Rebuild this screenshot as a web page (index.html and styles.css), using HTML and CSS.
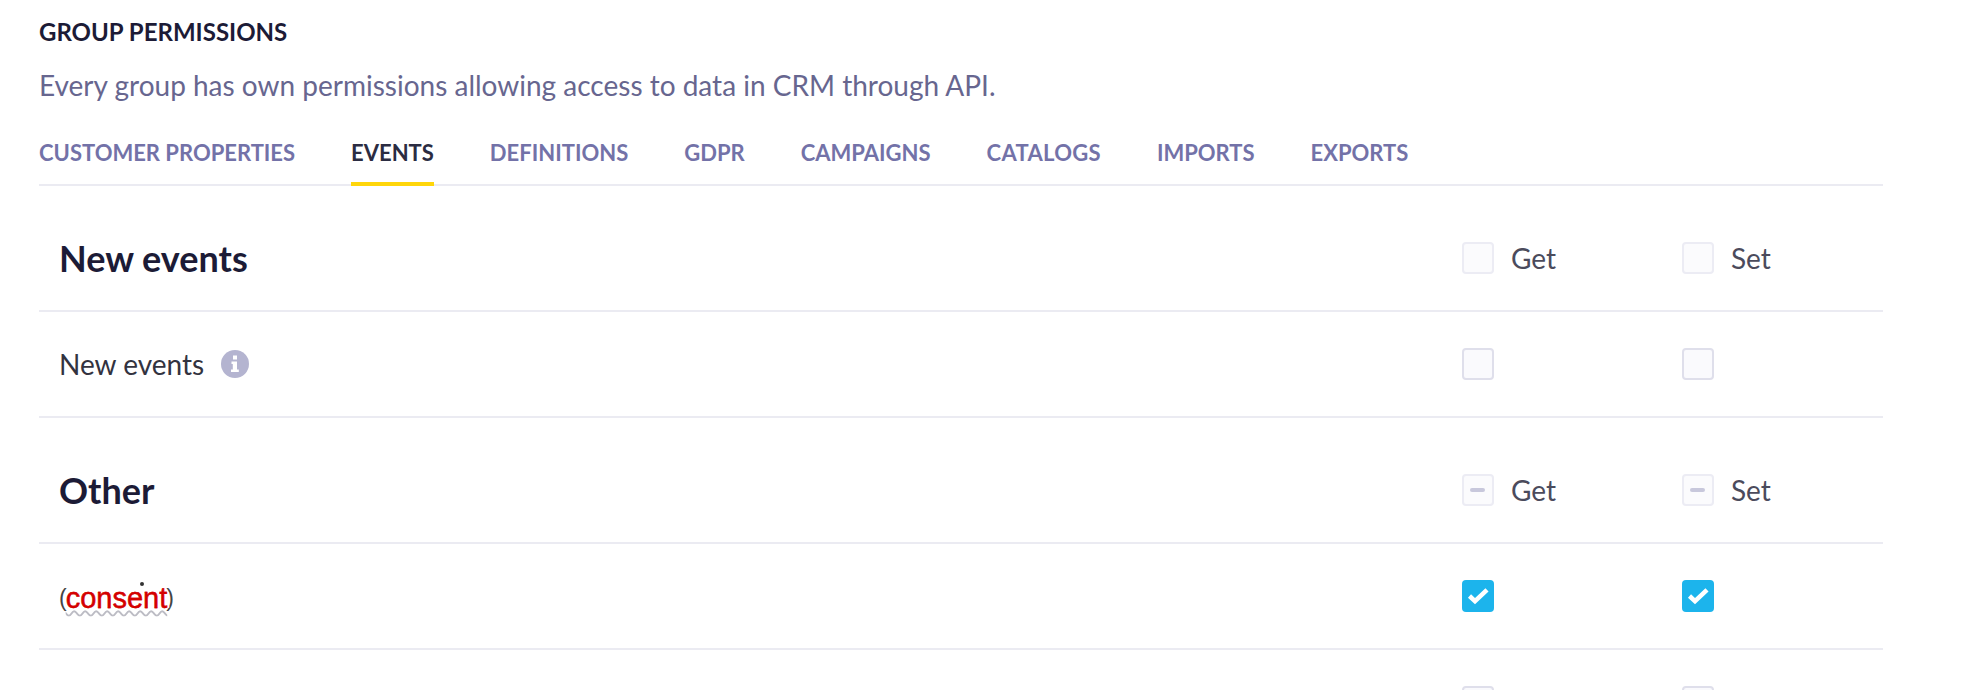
FILE: index.html
```html
<!DOCTYPE html>
<html lang="en">
<head>
<meta charset="utf-8">
<title>Group permissions</title>
<link rel="stylesheet" href="styles.css">
</head>
<body>
<main class="page">
  <h2 class="title">GROUP PERMISSIONS</h2>
  <p class="desc">Every group has own permissions allowing access to data in CRM through API.</p>
  <nav class="tabs">
    <a class="tab">CUSTOMER PROPERTIES</a>
    <a class="tab active">EVENTS</a>
    <a class="tab">DEFINITIONS</a>
    <a class="tab">GDPR</a>
    <a class="tab">CAMPAIGNS</a>
    <a class="tab tab-loose">CATALOGS</a>
    <a class="tab">IMPORTS</a>
    <a class="tab">EXPORTS</a>
  </nav>

  <section class="row head">
    <h3 class="section-name">New events</h3>
    <div class="cell"><span class="box faint"></span><span class="lbl">Get</span></div>
    <div class="cell"><span class="box faint"></span><span class="lbl">Set</span></div>
  </section>
  <section class="row item">
    <div class="name">New events
      <svg class="info" viewBox="0 0 28 28" width="28" height="28"><circle cx="14" cy="14" r="14" fill="#b4b4d0"/><path d="M12 5.500h4v4h-4zM10.500 11.500h5.500v8h1.800v2.500h-7.800v-2.500h1.800v-5.500h-1.300z" fill="#fff"/></svg>
    </div>
    <div class="cell"><span class="box"></span></div>
    <div class="cell"><span class="box"></span></div>
  </section>

  <section class="row head">
    <h3 class="section-name">Other</h3>
    <div class="cell"><span class="box faint mixed"></span><span class="lbl">Get</span></div>
    <div class="cell"><span class="box faint mixed"></span><span class="lbl">Set</span></div>
  </section>
  <section class="row item">
    <div class="name consent"><span class="paren">(</span><span class="word">consent</span><span class="paren">)</span></div>
    <div class="cell"><span class="box on"><svg viewBox="0 0 32 32" width="32" height="32"><path d="M7.500 16l5.500 5.200L25 9.800" fill="none" stroke="#fff" stroke-width="4.500"/></svg></span></div>
    <div class="cell"><span class="box on"><svg viewBox="0 0 32 32" width="32" height="32"><path d="M7.500 16l5.500 5.200L25 9.800" fill="none" stroke="#fff" stroke-width="4.500"/></svg></span></div>
  </section>
  <section class="row item">
    <div class="name"></div>
    <div class="cell"><span class="box"></span></div>
    <div class="cell"><span class="box"></span></div>
  </section>
</main>
</body>
</html>
```
FILE: styles.css
```css
html, body { margin: 0; padding: 0; background: #fff; height: 690px; overflow: hidden; }
body { font-family: Lato, "Open Sans", sans-serif; color: #1c1b36; }
.page { width: 1844px; margin-left: 39px; }
.title { margin: 0; padding-top: 19px; font-size: 24px; line-height: 26px; font-weight: 700; color: #1c1b36; }
.desc { margin: 0; padding-top: 20px; font-size: 28px; line-height: 40px; color: #67668f; }
.tabs { display: flex; align-items: flex-start; gap: 56px; border-bottom: 2px solid #ebebf2; height: 79px; }
.tab { display: block; box-sizing: border-box; font-size: 22px; line-height: 26px; font-weight: 700; color: #7372a8; padding-top: 35px; height: 81px; }
.tab.active { color: #2b2c42; border-bottom: 4px solid #ffd60a; }
.tab-loose { letter-spacing: 0.3px; }
.row { display: grid; grid-template-columns: 1403px 220px 1fr; align-items: center; border-bottom: 2px solid #ebebf2; padding-left: 20px; }
.head { height: 104px; padding-top: 20px; }
.item { height: 104px; }
.section-name { margin: 0; font-size: 36px; line-height: 44px; font-weight: 700; color: #1c1b36; }
.name { font-size: 28px; line-height: 36px; color: #33333f; display: flex; align-items: center; gap: 17px; }
.cell { display: flex; align-items: center; gap: 17px; }
.lbl { font-size: 28px; line-height: 34px; color: #4b4b5c; }
.box { width: 32px; height: 32px; box-sizing: border-box; border: 2px solid #dfdfeb; border-radius: 4px; background: #fafafd; display: block; position: relative; }
.box.faint { border-color: #ececf4; background: #fbfbfd; }
.box.mixed::after { content: ""; position: absolute; left: 6px; top: 12px; width: 15px; height: 4px; background: #c8c8dc; border-radius: 2px; }
.box.on { border: 0; background: #1cb4ec; }
.box.on svg { display: block; }
.consent { gap: 0; padding-top: 3px; font-family: "Liberation Sans", Arial, sans-serif; }
.word { position: relative; color: #d40000; font-size: 29px; line-height: 32px; -webkit-text-stroke: 0.3px #d40000; text-decoration: underline wavy #bcbcc4 2px; text-underline-offset: 2px; text-shadow: 2px 0 #fff, -2px 0 #fff; margin: 0 -1px; z-index: 1; }
.word::after { content: ""; position: absolute; left: 74px; top: 0; width: 4px; height: 4px; border-radius: 50%; background: #333; }
.paren { color: #444; font-size: 23px; }
```
